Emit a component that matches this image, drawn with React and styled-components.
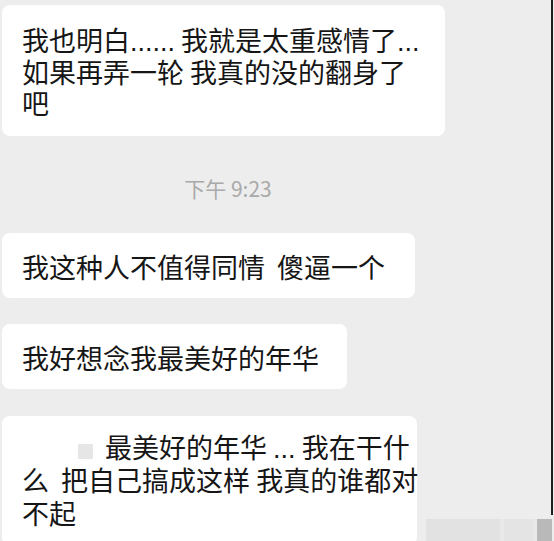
import React from "react";
import styled, { createGlobalStyle } from "styled-components";

const GlobalStyle = createGlobalStyle`
  html, body {
    margin: 0;
    padding: 0;
    background: #ededed;
  }
  body {
    font-family: "Noto Sans CJK SC", "Noto Sans", sans-serif;
  }
`;

const Screen = styled.div`
  position: relative;
  width: 554px;
  height: 541px;
  overflow: hidden;
  box-sizing: border-box;
  padding: 5px 0 0 2px;
  background: #ededed;
  display: flex;
  flex-direction: column;
  align-items: flex-start;

  &::after {
    content: "";
    position: absolute;
    top: 0;
    right: 1px;
    width: 2px;
    height: 515px;
    background: #1e1e1e;
  }
`;

const Bubble = styled.div`
  box-sizing: border-box;
  width: ${(p) => p.$w}px;
  margin-top: ${(p) => p.$mt || 0}px;
  padding: ${(p) => p.$pt || 18}px 20px ${(p) => p.$pb || 16}px 20px;
  background: #ffffff;
  border-radius: 8px;
  color: #161616;
  font-size: 27px;
  line-height: ${(p) => p.$lh || 31}px;
  white-space: nowrap;
  flex-shrink: 0;
`;

const Time = styled.div`
  width: 452px;
  margin: 38px 0 31px;
  text-align: center;
  color: #a9a9a9;
  font-size: 21px;
  line-height: 28px;
`;

const Dots = styled.span`
  font-family: "Liberation Sans", sans-serif;
  line-height: 1;
`;

const Redacted = styled.span`
  display: inline-block;
  width: 15px;
  height: 15px;
  margin: 0 12px 0 56px;
  background: #e6e6e6;
  vertical-align: -1px;
`;

const Watermark = styled.div`
  position: absolute;
  right: 2px;
  bottom: 0;
  width: 126px;
  height: 22px;
  display: flex;
  gap: 4px;
  background: #e9e9e9;
`;

const Mark = styled.div`
  flex: ${(p) => p.$grow};
  background: ${(p) => p.$c};
`;

export default function App() {
  return (
    <>
      <GlobalStyle />
      <Screen>
        <Bubble $w={443} $pt={19} $pb={18}>
          我也明白<Dots>......</Dots> 我就是太重感情了<Dots>...</Dots>
          <br />
          如果再弄一轮 我真的没的翻身了
          <br />吧
        </Bubble>
        <Time>下午 9:23</Time>
        <Bubble $w={413}>我这种人不值得同情&nbsp;&nbsp;傻逼一个</Bubble>
        <Bubble $w={345} $mt={26}>
          我好想念我最美好的年华
        </Bubble>
        <Bubble $w={415} $mt={27} $pt={14} $lh={33}>
          <Redacted />
          最美好的年华 <Dots>...</Dots> 我在干什
          <br />
          么&nbsp;&nbsp;把自己搞成这样 我真的谁都对
          <br />
          不起
        </Bubble>
        <Watermark>
          <Mark $grow={5} $c="#e2e2e2" />
          <Mark $grow={2} $c="#e4e4e4" />
          <Mark $grow={1} $c="#b9b9b9" />
        </Watermark>
      </Screen>
    </>
  );
}
